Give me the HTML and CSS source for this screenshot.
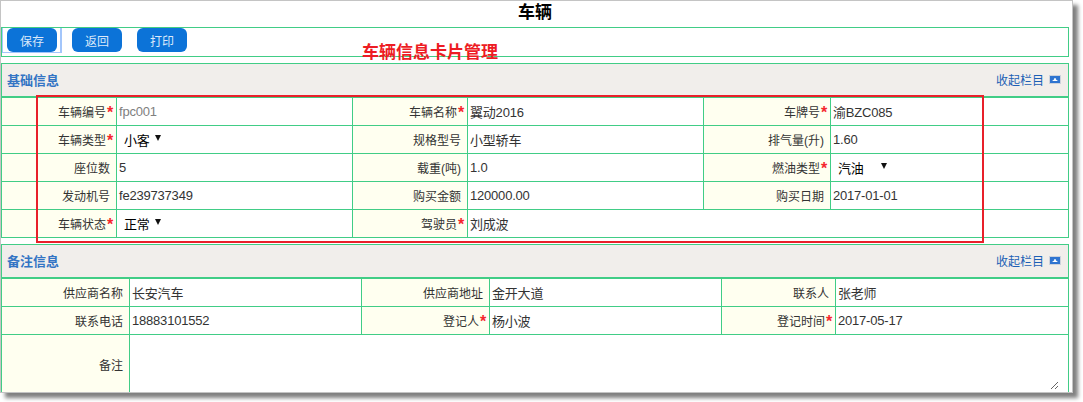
FILE: index.html
```html
<!DOCTYPE html>
<html lang="zh-CN">
<head>
    <meta charset="UTF-8">
    <title>车辆</title>
    <link rel="stylesheet" href="styles.css">
</head>
<body>
    <div class="window">
        <h1 class="page-title">车辆</h1>

        <div class="toolbar">
            <span class="focus-wrap"><button class="btn" type="button">保存</button></span>
            <button class="btn" type="button">返回</button>
            <button class="btn btn-last" type="button">打印</button>
        </div>

        <section class="panel">
            <div class="panel-head">
                <span class="panel-title">基础信息</span>
                <a class="collapse" href="#">收起栏目
                    <svg class="collapse-icon" width="12" height="9" viewBox="0 0 12 9">
                        <rect x="0.5" y="0.5" width="11" height="8" fill="#2f74d0" stroke="#ccd2dc"/>
                        <path d="M3 6 L5 4.5 L5.5 3 L6.5 3 L7 4.5 L9 6 Z" fill="#fff"/>
                    </svg>
                </a>
            </div>
            <table class="form-table basic">
                <colgroup>
                    <col class="c1"><col class="c2"><col class="c3"><col class="c4"><col class="c5"><col class="c6">
                </colgroup>
                <tr>
                    <th>车辆编号<i class="req">*</i></th><td class="muted">fpc001</td>
                    <th>车辆名称<i class="req">*</i></th><td>翼动2016</td>
                    <th>车牌号<i class="req">*</i></th><td>渝BZC085</td>
                </tr>
                <tr>
                    <th>车辆类型<i class="req">*</i></th><td><span class="sel sel-short">小客</span></td>
                    <th>规格型号</th><td>小型轿车</td>
                    <th>排气量(升)</th><td>1.60</td>
                </tr>
                <tr>
                    <th>座位数</th><td>5</td>
                    <th>载重(吨)</th><td>1.0</td>
                    <th>燃油类型<i class="req">*</i></th><td><span class="sel sel-long">汽油</span></td>
                </tr>
                <tr>
                    <th>发动机号</th><td>fe239737349</td>
                    <th>购买金额</th><td>120000.00</td>
                    <th>购买日期</th><td>2017-01-01</td>
                </tr>
                <tr>
                    <th>车辆状态<i class="req">*</i></th><td><span class="sel sel-short">正常</span></td>
                    <th>驾驶员<i class="req">*</i></th><td colspan="3">刘成波</td>
                </tr>
            </table>
        </section>

        <section class="panel">
            <div class="panel-head">
                <span class="panel-title">备注信息</span>
                <a class="collapse" href="#">收起栏目
                    <svg class="collapse-icon" width="12" height="9" viewBox="0 0 12 9">
                        <rect x="0.5" y="0.5" width="11" height="8" fill="#2f74d0" stroke="#ccd2dc"/>
                        <path d="M3 6 L5 4.5 L5.5 3 L6.5 3 L7 4.5 L9 6 Z" fill="#fff"/>
                    </svg>
                </a>
            </div>
            <table class="form-table remark">
                <colgroup>
                    <col class="c1"><col class="c2"><col class="c3"><col class="c4"><col class="c5"><col class="c6">
                </colgroup>
                <tr>
                    <th>供应商名称</th><td>长安汽车</td>
                    <th>供应商地址</th><td>金开大道</td>
                    <th>联系人</th><td>张老师</td>
                </tr>
                <tr>
                    <th>联系电话</th><td>18883101552</td>
                    <th>登记人<i class="req">*</i></th><td>杨小波</td>
                    <th>登记时间<i class="req">*</i></th><td>2017-05-17</td>
                </tr>
                <tr class="note-row">
                    <th>备注</th>
                    <td colspan="5"><textarea class="note"></textarea></td>
                </tr>
            </table>
        </section>

        <!-- annotation drawn over the screen -->
        <div class="note-title">车辆信息卡片管理</div>
        <div class="note-frame"></div>
    </div>
</body>
</html>
```

FILE: styles.css
```css
* {
    margin: 0;
    padding: 0;
    box-sizing: border-box;
}

body {
    font-family: "Liberation Sans", "Noto Sans CJK SC", sans-serif;
    font-size: 12px;
    color: #333;
    background: #fff;
    height: 402px;
    overflow: hidden;
}

.window {
    position: relative;
    width: 1073px;
    height: 393px;
    background: #fff;
    border: 1px solid #c4c4c4;
    box-shadow: 5px 5px 4px #808080;
    overflow: hidden;
}

.page-title {
    height: 26px;
    line-height: 23px;
    font-size: 17px;
    font-weight: bold;
    color: #000;
    text-align: center;
    padding-right: 3px;
}

.toolbar {
    display: flex;
    align-items: flex-start;
    width: 1068px;
    height: 30px;
    border: 1px solid #41cd86;
    margin-bottom: 6px;
}

.focus-wrap {
    display: block;
    height: 25px;
    padding: 0 3px 0 4px;
    border: 1px solid #a3c6fb;
    border-top-width: 0;
    border-right-width: 2px;
    margin-right: 10px;
}

.btn {
    display: block;
    width: 50px;
    height: 24px;
    font: 12px "Liberation Sans", "Noto Sans CJK SC", sans-serif;
    color: #dbe9fa;
    background: #0c73d8;
    border: none;
    border-radius: 6px;
}

.btn-last {
    margin-left: 15px;
}

.panel {
    width: 1068px;
    border-left: 1px solid #41cd86;
    border-right: 1px solid #41cd86;
    border-top: 1px solid #41cd86;
    margin-bottom: 6px;
}

.panel-head {
    display: flex;
    justify-content: space-between;
    align-items: center;
    height: 34px;
    padding: 0 7px 2px 5px;
    background: #f1eeeb;
    border-bottom: 2px solid #41cd86;
}

.panel-title {
    font-size: 13px;
    font-weight: bold;
    color: #3374c4;
}

.collapse {
    display: flex;
    align-items: center;
    gap: 5px;
    color: #1c5fb5;
    text-decoration: none;
}

.form-table {
    width: 1066px;
    table-layout: fixed;
    border-collapse: separate;
    border-spacing: 0;
}

.form-table th,
.form-table td {
    height: 28px;
    border-bottom: 1px solid #41cd86;
    border-right: 1px solid #41cd86;
}

.form-table th {
    padding-right: 6px;
    font-weight: normal;
    text-align: right;
    background: #fffff0;
}

.form-table td {
    padding-left: 2px;
    font-size: 13px;
    letter-spacing: -0.2px;
    color: #333;
    background: #fff;
}

.form-table td:last-child {
    border-right: none;
}

.form-table td.muted {
    color: #808080;
}

.basic .c1, .basic .c3 { width: 115px; }
.basic .c2, .basic .c4 { width: 236px; }
.basic .c5 { width: 127px; }
.basic .c6 { width: 237px; }

.remark .c1, .remark .c3 { width: 128px; }
.remark .c2, .remark .c4, .remark .c6 { width: 232px; }
.remark .c5 { width: 114px; }

.req {
    display: inline-block;
    width: 8px;
    height: 14px;
    margin-right: -4px;
    font-size: 16px;
    line-height: 19px;
    font-style: normal;
    font-weight: bold;
    color: #f5262e;
    text-align: center;
    vertical-align: top;
}

.sel {
    display: inline-flex;
    justify-content: space-between;
    align-items: center;
    padding-left: 5px;
    color: #000;
}

.sel::after {
    content: "";
    margin-top: -3px;
    border-left: 3px solid transparent;
    border-right: 3px solid transparent;
    border-top: 6px solid #111;
}

.sel-short {
    width: 42px;
}

.sel-long {
    width: 54px;
}

.note-row th,
.note-row td {
    height: 58px;
    border-bottom: none;
}

.note-row td {
    padding: 0;
    vertical-align: top;
}

.note {
    display: block;
    width: 929px;
    height: 55px;
    border: none;
    outline: none;
    resize: both;
}

.note-title {
    position: absolute;
    left: 361px;
    top: 42px;
    font-size: 17px;
    font-weight: bold;
    line-height: 20px;
    color: #ed1c24;
}

.note-frame {
    position: absolute;
    left: 35px;
    top: 94px;
    width: 948px;
    height: 148px;
    border: 2px solid #e8202a;
}
```
